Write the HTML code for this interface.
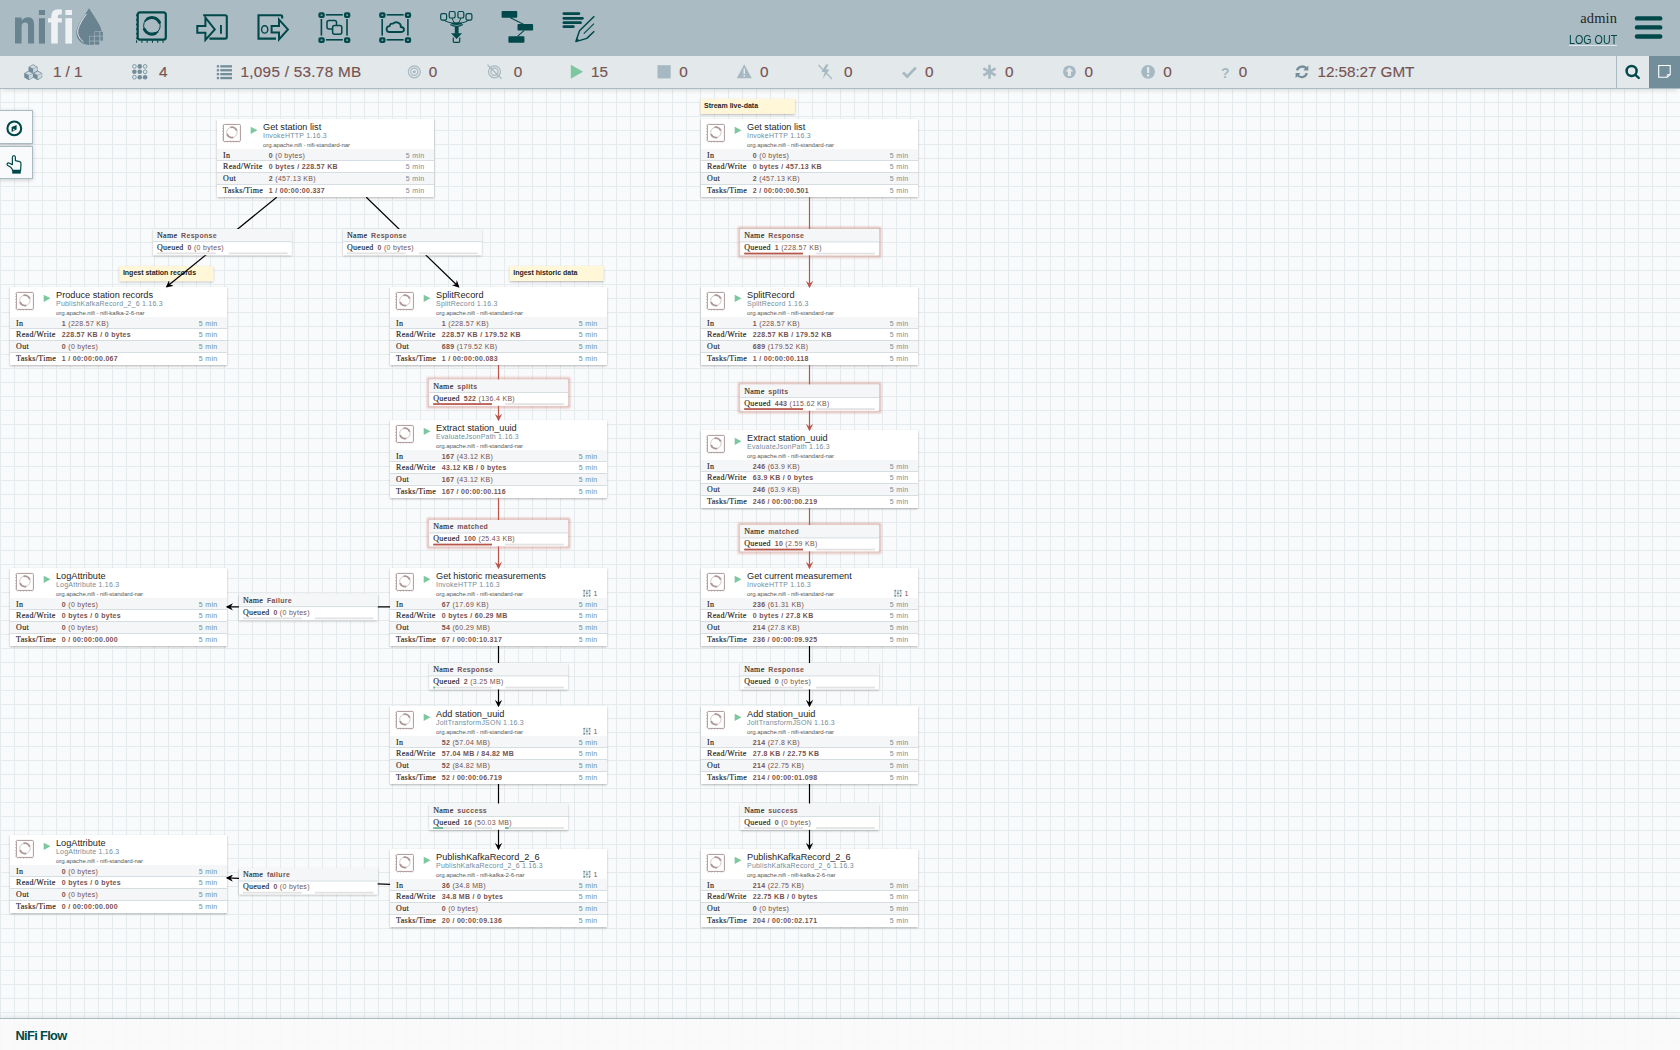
<!DOCTYPE html>
<html><head><meta charset="utf-8"><title>NiFi Flow</title>
<style>
html,body{margin:0;padding:0;width:1680px;height:1050px;overflow:hidden;font-family:"Liberation Sans", sans-serif;}
#canvas{position:absolute;left:0;top:88px;width:1680px;height:962px;background-color:#f9fafb;
background-image:linear-gradient(to right, #e5ebed 1px, transparent 1px),linear-gradient(to bottom, #e5ebed 1px, transparent 1px);
background-size:14px 14px;background-position:0 0;}
#cv{position:absolute;left:0;top:0;}
.pn{font-family:"Liberation Sans", sans-serif;font-size:9.2px;fill:#262626;}
.pt{font-family:"Liberation Sans", sans-serif;font-size:7.0px;fill:#728e9b;letter-spacing:0.22px;}
.pb{font-family:"Liberation Sans", sans-serif;font-size:6.1px;fill:#5a5a5a;letter-spacing:-0.08px;}
.sl{font-family:"Liberation Serif", serif;font-size:8.0px;fill:#262626;letter-spacing:0.3px;stroke:#262626;stroke-width:0.15px;}
.sv{font-family:"Liberation Sans", sans-serif;font-size:7.0px;fill:#775351;letter-spacing:0.3px;}
.b{font-weight:bold;}
.si{font-family:"Liberation Sans", sans-serif;font-size:7.0px;fill:#728e9b;text-anchor:end;letter-spacing:0.34px;}
.tc{text-anchor:end;}
.lt{font-family:"Liberation Sans", sans-serif;font-size:7px;font-weight:bold;fill:#262626;}

#header{position:absolute;left:0;top:0;width:1680px;height:56px;background:#aabbc3;z-index:10;}
#hdr{position:absolute;left:0;top:0;}
#user{position:absolute;right:63px;top:8.7px;font-family:"Liberation Serif",serif;font-size:14.5px;color:#262626;line-height:18px;letter-spacing:0.1px;}
#logout{position:absolute;left:1569px;top:33.7px;width:56.5px;font-family:"Liberation Sans",sans-serif;font-size:12.6px;color:#004849;line-height:13px;transform:scaleX(0.85);transform-origin:0 0;white-space:nowrap;}
#logul{position:absolute;left:1569px;top:45px;width:48px;height:1px;background:#dfe6e9;}
#status{position:absolute;left:0;top:56px;width:1680px;height:32px;background:#e3e8eb;border-bottom:1px solid #aabbc3;z-index:10;box-shadow:0 3px 5px -2px rgba(0,0,0,0.15);}
#sts{position:absolute;left:0;top:0;z-index:2;}
.st{position:absolute;top:4.0px;font-family:"Liberation Sans",sans-serif;font-size:15.3px;line-height:24px;color:#775351;white-space:nowrap;z-index:3;-webkit-text-stroke:0.15px #775351;letter-spacing:-0.08px;}
#srch{position:absolute;left:1616px;top:0;width:32px;height:32px;border-left:1px solid #aabbc3;}
#tog{position:absolute;left:1648.5px;top:0;width:31.5px;height:32px;background:#728e9b;z-index:1;}
.gc{position:absolute;left:-1px;width:31.6px;height:31.4px;border:1px solid #aabbc3;background:rgba(249,250,251,0.92);box-shadow:0 1px 4px rgba(0,0,0,0.2);z-index:5;}
#gcicons{position:absolute;left:0;top:100px;z-index:6;}
#footer{position:absolute;left:0;top:1018px;width:1680px;height:31px;border-top:1px solid #aabbc3;background:rgba(249,250,251,0.9);z-index:5;box-shadow:0 -1px 5px rgba(0,0,0,0.1);}
#footer span{position:absolute;left:15.5px;top:9px;font-family:"Liberation Sans",sans-serif;font-weight:bold;font-size:12.8px;line-height:16px;color:#004849;letter-spacing:-0.65px;}

</style></head><body>
<div id="canvas"></div>
<svg id="cv" width="1680" height="1050" viewBox="0 0 1680 1050">
<defs>
<filter id="sh" x="-10%" y="-20%" width="120%" height="140%"><feGaussianBlur in="SourceAlpha" stdDeviation="1.2"/><feOffset dx="0.4" dy="0.6" result="b"/><feFlood flood-color="#000" flood-opacity="0.28"/><feComposite in2="b" operator="in"/><feMerge><feMergeNode/><feMergeNode in="SourceGraphic"/></feMerge></filter>
<filter id="blur1" x="-10%" y="-30%" width="120%" height="160%"><feGaussianBlur stdDeviation="0.9"/></filter>
<marker id="ab" viewBox="0 0 6 6" refX="5" refY="3" markerWidth="6" markerHeight="6" orient="auto" markerUnits="strokeWidth"><path d="M2,3 L0,6 L6,3 L0,0 Z" fill="#000"/></marker>
<marker id="ar" viewBox="0 0 6 6" refX="5" refY="3" markerWidth="6" markerHeight="6" orient="auto" markerUnits="strokeWidth"><path d="M2,3 L0,6 L6,3 L0,0 Z" fill="#ba554a"/></marker>
</defs>
<rect x="119.5" y="266.1" width="93.8" height="15.0" fill="#fff7d7" filter="url(#sh)"/><text x="122.90" y="275.00" class="lt">Ingest station records</text>
<rect x="509.8" y="266.0" width="93.7" height="15.0" fill="#fff7d7" filter="url(#sh)"/><text x="513.20" y="274.90" class="lt">Ingest historic data</text>
<rect x="700.6" y="98.9" width="94.3" height="15.0" fill="#fff7d7" filter="url(#sh)"/><text x="704.00" y="107.80" class="lt">Stream live-data</text>
<g transform="translate(10,287)"><rect x="0" y="0" width="217.0" height="78.0" fill="#fff" filter="url(#sh)"/><rect x="0" y="30.0" width="217.0" height="11.299999999999997" fill="#f4f6f7"/><rect x="0" y="53.3" width="217.0" height="12.100000000000009" fill="#f4f6f7"/><rect x="0" y="41.00" width="217.0" height="0.7" fill="#c7d2d7"/><rect x="0" y="53.00" width="217.0" height="0.7" fill="#c7d2d7"/><rect x="0" y="65.10" width="217.0" height="0.7" fill="#c7d2d7"/><rect x="6.40" y="5.40" width="17.00" height="17.00" rx="1" fill="none" stroke="#ad9897" stroke-width="1.0"/><rect x="7.47" y="22.80" width="0.7" height="0.7" fill="#ad9897"/><rect x="5.30" y="6.47" width="0.7" height="0.7" fill="#ad9897"/><rect x="10.30" y="22.80" width="0.7" height="0.7" fill="#ad9897"/><rect x="5.30" y="9.30" width="0.7" height="0.7" fill="#ad9897"/><rect x="13.13" y="22.80" width="0.7" height="0.7" fill="#ad9897"/><rect x="5.30" y="12.13" width="0.7" height="0.7" fill="#ad9897"/><rect x="15.97" y="22.80" width="0.7" height="0.7" fill="#ad9897"/><rect x="5.30" y="14.97" width="0.7" height="0.7" fill="#ad9897"/><rect x="18.80" y="22.80" width="0.7" height="0.7" fill="#ad9897"/><rect x="5.30" y="17.80" width="0.7" height="0.7" fill="#ad9897"/><rect x="21.63" y="22.80" width="0.7" height="0.7" fill="#ad9897"/><rect x="5.30" y="20.63" width="0.7" height="0.7" fill="#ad9897"/><circle cx="14.90" cy="13.40" r="5.20" fill="none" stroke="#ad9897" stroke-width="0.55"/><path d="M13.55,8.38 A5.20,5.20 0 0 1 19.79,11.62" fill="none" stroke="#ad9897" stroke-width="1.9"/><path d="M16.25,18.42 A5.20,5.20 0 0 1 10.01,15.18" fill="none" stroke="#ad9897" stroke-width="1.9"/><path d="M33.7,7.7 L40.5,11.3 L33.7,14.9 Z" fill="#7dc7a0"/><text x="46.0" y="11.4" class="pn">Produce station records</text><text x="46.0" y="19.3" class="pt">PublishKafkaRecord_2_6 1.16.3</text><text x="46.0" y="28.0" class="pb">org.apache.nifi - nifi-kafka-2-6-nar</text><text x="6.1" y="39.3" class="sl">In</text><text x="51.8" y="39.3" class="sv"><tspan class="b">1</tspan> (228.57 KB)</text><text x="207.60" y="39.3" class="si">5 min</text><text x="6.1" y="50.2" class="sl">Read/Write</text><text x="51.8" y="50.2" class="sv"><tspan class="b">228.57 KB / 0 bytes</tspan></text><text x="207.60" y="50.2" class="si">5 min</text><text x="6.1" y="62.1" class="sl">Out</text><text x="51.8" y="62.1" class="sv"><tspan class="b">0</tspan> (0 bytes)</text><text x="207.60" y="62.1" class="si">5 min</text><text x="6.1" y="74.3" class="sl">Tasks/Time</text><text x="51.8" y="74.3" class="sv"><tspan class="b">1 / 00:00:00.067</tspan></text><text x="207.60" y="74.3" class="si">5 min</text></g>
<g transform="translate(10,568)"><rect x="0" y="0" width="217.0" height="78.0" fill="#fff" filter="url(#sh)"/><rect x="0" y="30.0" width="217.0" height="11.299999999999997" fill="#f4f6f7"/><rect x="0" y="53.3" width="217.0" height="12.100000000000009" fill="#f4f6f7"/><rect x="0" y="41.00" width="217.0" height="0.7" fill="#c7d2d7"/><rect x="0" y="53.00" width="217.0" height="0.7" fill="#c7d2d7"/><rect x="0" y="65.10" width="217.0" height="0.7" fill="#c7d2d7"/><rect x="6.40" y="5.40" width="17.00" height="17.00" rx="1" fill="none" stroke="#ad9897" stroke-width="1.0"/><rect x="7.47" y="22.80" width="0.7" height="0.7" fill="#ad9897"/><rect x="5.30" y="6.47" width="0.7" height="0.7" fill="#ad9897"/><rect x="10.30" y="22.80" width="0.7" height="0.7" fill="#ad9897"/><rect x="5.30" y="9.30" width="0.7" height="0.7" fill="#ad9897"/><rect x="13.13" y="22.80" width="0.7" height="0.7" fill="#ad9897"/><rect x="5.30" y="12.13" width="0.7" height="0.7" fill="#ad9897"/><rect x="15.97" y="22.80" width="0.7" height="0.7" fill="#ad9897"/><rect x="5.30" y="14.97" width="0.7" height="0.7" fill="#ad9897"/><rect x="18.80" y="22.80" width="0.7" height="0.7" fill="#ad9897"/><rect x="5.30" y="17.80" width="0.7" height="0.7" fill="#ad9897"/><rect x="21.63" y="22.80" width="0.7" height="0.7" fill="#ad9897"/><rect x="5.30" y="20.63" width="0.7" height="0.7" fill="#ad9897"/><circle cx="14.90" cy="13.40" r="5.20" fill="none" stroke="#ad9897" stroke-width="0.55"/><path d="M13.55,8.38 A5.20,5.20 0 0 1 19.79,11.62" fill="none" stroke="#ad9897" stroke-width="1.9"/><path d="M16.25,18.42 A5.20,5.20 0 0 1 10.01,15.18" fill="none" stroke="#ad9897" stroke-width="1.9"/><path d="M33.7,7.7 L40.5,11.3 L33.7,14.9 Z" fill="#7dc7a0"/><text x="46.0" y="11.4" class="pn">LogAttribute</text><text x="46.0" y="19.3" class="pt">LogAttribute 1.16.3</text><text x="46.0" y="28.0" class="pb">org.apache.nifi - nifi-standard-nar</text><text x="6.1" y="39.3" class="sl">In</text><text x="51.8" y="39.3" class="sv"><tspan class="b">0</tspan> (0 bytes)</text><text x="207.60" y="39.3" class="si">5 min</text><text x="6.1" y="50.2" class="sl">Read/Write</text><text x="51.8" y="50.2" class="sv"><tspan class="b">0 bytes / 0 bytes</tspan></text><text x="207.60" y="50.2" class="si">5 min</text><text x="6.1" y="62.1" class="sl">Out</text><text x="51.8" y="62.1" class="sv"><tspan class="b">0</tspan> (0 bytes)</text><text x="207.60" y="62.1" class="si">5 min</text><text x="6.1" y="74.3" class="sl">Tasks/Time</text><text x="51.8" y="74.3" class="sv"><tspan class="b">0 / 00:00:00.000</tspan></text><text x="207.60" y="74.3" class="si">5 min</text></g>
<g transform="translate(10,835)"><rect x="0" y="0" width="217.0" height="78.0" fill="#fff" filter="url(#sh)"/><rect x="0" y="30.0" width="217.0" height="11.299999999999997" fill="#f4f6f7"/><rect x="0" y="53.3" width="217.0" height="12.100000000000009" fill="#f4f6f7"/><rect x="0" y="41.00" width="217.0" height="0.7" fill="#c7d2d7"/><rect x="0" y="53.00" width="217.0" height="0.7" fill="#c7d2d7"/><rect x="0" y="65.10" width="217.0" height="0.7" fill="#c7d2d7"/><rect x="6.40" y="5.40" width="17.00" height="17.00" rx="1" fill="none" stroke="#ad9897" stroke-width="1.0"/><rect x="7.47" y="22.80" width="0.7" height="0.7" fill="#ad9897"/><rect x="5.30" y="6.47" width="0.7" height="0.7" fill="#ad9897"/><rect x="10.30" y="22.80" width="0.7" height="0.7" fill="#ad9897"/><rect x="5.30" y="9.30" width="0.7" height="0.7" fill="#ad9897"/><rect x="13.13" y="22.80" width="0.7" height="0.7" fill="#ad9897"/><rect x="5.30" y="12.13" width="0.7" height="0.7" fill="#ad9897"/><rect x="15.97" y="22.80" width="0.7" height="0.7" fill="#ad9897"/><rect x="5.30" y="14.97" width="0.7" height="0.7" fill="#ad9897"/><rect x="18.80" y="22.80" width="0.7" height="0.7" fill="#ad9897"/><rect x="5.30" y="17.80" width="0.7" height="0.7" fill="#ad9897"/><rect x="21.63" y="22.80" width="0.7" height="0.7" fill="#ad9897"/><rect x="5.30" y="20.63" width="0.7" height="0.7" fill="#ad9897"/><circle cx="14.90" cy="13.40" r="5.20" fill="none" stroke="#ad9897" stroke-width="0.55"/><path d="M13.55,8.38 A5.20,5.20 0 0 1 19.79,11.62" fill="none" stroke="#ad9897" stroke-width="1.9"/><path d="M16.25,18.42 A5.20,5.20 0 0 1 10.01,15.18" fill="none" stroke="#ad9897" stroke-width="1.9"/><path d="M33.7,7.7 L40.5,11.3 L33.7,14.9 Z" fill="#7dc7a0"/><text x="46.0" y="11.4" class="pn">LogAttribute</text><text x="46.0" y="19.3" class="pt">LogAttribute 1.16.3</text><text x="46.0" y="28.0" class="pb">org.apache.nifi - nifi-standard-nar</text><text x="6.1" y="39.3" class="sl">In</text><text x="51.8" y="39.3" class="sv"><tspan class="b">0</tspan> (0 bytes)</text><text x="207.60" y="39.3" class="si">5 min</text><text x="6.1" y="50.2" class="sl">Read/Write</text><text x="51.8" y="50.2" class="sv"><tspan class="b">0 bytes / 0 bytes</tspan></text><text x="207.60" y="50.2" class="si">5 min</text><text x="6.1" y="62.1" class="sl">Out</text><text x="51.8" y="62.1" class="sv"><tspan class="b">0</tspan> (0 bytes)</text><text x="207.60" y="62.1" class="si">5 min</text><text x="6.1" y="74.3" class="sl">Tasks/Time</text><text x="51.8" y="74.3" class="sv"><tspan class="b">0 / 00:00:00.000</tspan></text><text x="207.60" y="74.3" class="si">5 min</text></g>
<g transform="translate(217,119)"><rect x="0" y="0" width="217.0" height="78.0" fill="#fff" filter="url(#sh)"/><rect x="0" y="30.0" width="217.0" height="11.299999999999997" fill="#f4f6f7"/><rect x="0" y="53.3" width="217.0" height="12.100000000000009" fill="#f4f6f7"/><rect x="0" y="41.00" width="217.0" height="0.7" fill="#c7d2d7"/><rect x="0" y="53.00" width="217.0" height="0.7" fill="#c7d2d7"/><rect x="0" y="65.10" width="217.0" height="0.7" fill="#c7d2d7"/><rect x="6.40" y="5.40" width="17.00" height="17.00" rx="1" fill="none" stroke="#ad9897" stroke-width="1.0"/><rect x="7.47" y="22.80" width="0.7" height="0.7" fill="#ad9897"/><rect x="5.30" y="6.47" width="0.7" height="0.7" fill="#ad9897"/><rect x="10.30" y="22.80" width="0.7" height="0.7" fill="#ad9897"/><rect x="5.30" y="9.30" width="0.7" height="0.7" fill="#ad9897"/><rect x="13.13" y="22.80" width="0.7" height="0.7" fill="#ad9897"/><rect x="5.30" y="12.13" width="0.7" height="0.7" fill="#ad9897"/><rect x="15.97" y="22.80" width="0.7" height="0.7" fill="#ad9897"/><rect x="5.30" y="14.97" width="0.7" height="0.7" fill="#ad9897"/><rect x="18.80" y="22.80" width="0.7" height="0.7" fill="#ad9897"/><rect x="5.30" y="17.80" width="0.7" height="0.7" fill="#ad9897"/><rect x="21.63" y="22.80" width="0.7" height="0.7" fill="#ad9897"/><rect x="5.30" y="20.63" width="0.7" height="0.7" fill="#ad9897"/><circle cx="14.90" cy="13.40" r="5.20" fill="none" stroke="#ad9897" stroke-width="0.55"/><path d="M13.55,8.38 A5.20,5.20 0 0 1 19.79,11.62" fill="none" stroke="#ad9897" stroke-width="1.9"/><path d="M16.25,18.42 A5.20,5.20 0 0 1 10.01,15.18" fill="none" stroke="#ad9897" stroke-width="1.9"/><path d="M33.7,7.7 L40.5,11.3 L33.7,14.9 Z" fill="#7dc7a0"/><text x="46.0" y="11.4" class="pn">Get station list</text><text x="46.0" y="19.3" class="pt">InvokeHTTP 1.16.3</text><text x="46.0" y="28.0" class="pb">org.apache.nifi - nifi-standard-nar</text><text x="6.1" y="39.3" class="sl">In</text><text x="51.8" y="39.3" class="sv"><tspan class="b">0</tspan> (0 bytes)</text><text x="207.60" y="39.3" class="si">5 min</text><text x="6.1" y="50.2" class="sl">Read/Write</text><text x="51.8" y="50.2" class="sv"><tspan class="b">0 bytes / 228.57 KB</tspan></text><text x="207.60" y="50.2" class="si">5 min</text><text x="6.1" y="62.1" class="sl">Out</text><text x="51.8" y="62.1" class="sv"><tspan class="b">2</tspan> (457.13 KB)</text><text x="207.60" y="62.1" class="si">5 min</text><text x="6.1" y="74.3" class="sl">Tasks/Time</text><text x="51.8" y="74.3" class="sv"><tspan class="b">1 / 00:00:00.337</tspan></text><text x="207.60" y="74.3" class="si">5 min</text></g>
<g transform="translate(390,287)"><rect x="0" y="0" width="217.0" height="78.0" fill="#fff" filter="url(#sh)"/><rect x="0" y="30.0" width="217.0" height="11.299999999999997" fill="#f4f6f7"/><rect x="0" y="53.3" width="217.0" height="12.100000000000009" fill="#f4f6f7"/><rect x="0" y="41.00" width="217.0" height="0.7" fill="#c7d2d7"/><rect x="0" y="53.00" width="217.0" height="0.7" fill="#c7d2d7"/><rect x="0" y="65.10" width="217.0" height="0.7" fill="#c7d2d7"/><rect x="6.40" y="5.40" width="17.00" height="17.00" rx="1" fill="none" stroke="#ad9897" stroke-width="1.0"/><rect x="7.47" y="22.80" width="0.7" height="0.7" fill="#ad9897"/><rect x="5.30" y="6.47" width="0.7" height="0.7" fill="#ad9897"/><rect x="10.30" y="22.80" width="0.7" height="0.7" fill="#ad9897"/><rect x="5.30" y="9.30" width="0.7" height="0.7" fill="#ad9897"/><rect x="13.13" y="22.80" width="0.7" height="0.7" fill="#ad9897"/><rect x="5.30" y="12.13" width="0.7" height="0.7" fill="#ad9897"/><rect x="15.97" y="22.80" width="0.7" height="0.7" fill="#ad9897"/><rect x="5.30" y="14.97" width="0.7" height="0.7" fill="#ad9897"/><rect x="18.80" y="22.80" width="0.7" height="0.7" fill="#ad9897"/><rect x="5.30" y="17.80" width="0.7" height="0.7" fill="#ad9897"/><rect x="21.63" y="22.80" width="0.7" height="0.7" fill="#ad9897"/><rect x="5.30" y="20.63" width="0.7" height="0.7" fill="#ad9897"/><circle cx="14.90" cy="13.40" r="5.20" fill="none" stroke="#ad9897" stroke-width="0.55"/><path d="M13.55,8.38 A5.20,5.20 0 0 1 19.79,11.62" fill="none" stroke="#ad9897" stroke-width="1.9"/><path d="M16.25,18.42 A5.20,5.20 0 0 1 10.01,15.18" fill="none" stroke="#ad9897" stroke-width="1.9"/><path d="M33.7,7.7 L40.5,11.3 L33.7,14.9 Z" fill="#7dc7a0"/><text x="46.0" y="11.4" class="pn">SplitRecord</text><text x="46.0" y="19.3" class="pt">SplitRecord 1.16.3</text><text x="46.0" y="28.0" class="pb">org.apache.nifi - nifi-standard-nar</text><text x="6.1" y="39.3" class="sl">In</text><text x="51.8" y="39.3" class="sv"><tspan class="b">1</tspan> (228.57 KB)</text><text x="207.60" y="39.3" class="si">5 min</text><text x="6.1" y="50.2" class="sl">Read/Write</text><text x="51.8" y="50.2" class="sv"><tspan class="b">228.57 KB / 179.52 KB</tspan></text><text x="207.60" y="50.2" class="si">5 min</text><text x="6.1" y="62.1" class="sl">Out</text><text x="51.8" y="62.1" class="sv"><tspan class="b">689</tspan> (179.52 KB)</text><text x="207.60" y="62.1" class="si">5 min</text><text x="6.1" y="74.3" class="sl">Tasks/Time</text><text x="51.8" y="74.3" class="sv"><tspan class="b">1 / 00:00:00.083</tspan></text><text x="207.60" y="74.3" class="si">5 min</text></g>
<g transform="translate(390,420)"><rect x="0" y="0" width="217.0" height="78.0" fill="#fff" filter="url(#sh)"/><rect x="0" y="30.0" width="217.0" height="11.299999999999997" fill="#f4f6f7"/><rect x="0" y="53.3" width="217.0" height="12.100000000000009" fill="#f4f6f7"/><rect x="0" y="41.00" width="217.0" height="0.7" fill="#c7d2d7"/><rect x="0" y="53.00" width="217.0" height="0.7" fill="#c7d2d7"/><rect x="0" y="65.10" width="217.0" height="0.7" fill="#c7d2d7"/><rect x="6.40" y="5.40" width="17.00" height="17.00" rx="1" fill="none" stroke="#ad9897" stroke-width="1.0"/><rect x="7.47" y="22.80" width="0.7" height="0.7" fill="#ad9897"/><rect x="5.30" y="6.47" width="0.7" height="0.7" fill="#ad9897"/><rect x="10.30" y="22.80" width="0.7" height="0.7" fill="#ad9897"/><rect x="5.30" y="9.30" width="0.7" height="0.7" fill="#ad9897"/><rect x="13.13" y="22.80" width="0.7" height="0.7" fill="#ad9897"/><rect x="5.30" y="12.13" width="0.7" height="0.7" fill="#ad9897"/><rect x="15.97" y="22.80" width="0.7" height="0.7" fill="#ad9897"/><rect x="5.30" y="14.97" width="0.7" height="0.7" fill="#ad9897"/><rect x="18.80" y="22.80" width="0.7" height="0.7" fill="#ad9897"/><rect x="5.30" y="17.80" width="0.7" height="0.7" fill="#ad9897"/><rect x="21.63" y="22.80" width="0.7" height="0.7" fill="#ad9897"/><rect x="5.30" y="20.63" width="0.7" height="0.7" fill="#ad9897"/><circle cx="14.90" cy="13.40" r="5.20" fill="none" stroke="#ad9897" stroke-width="0.55"/><path d="M13.55,8.38 A5.20,5.20 0 0 1 19.79,11.62" fill="none" stroke="#ad9897" stroke-width="1.9"/><path d="M16.25,18.42 A5.20,5.20 0 0 1 10.01,15.18" fill="none" stroke="#ad9897" stroke-width="1.9"/><path d="M33.7,7.7 L40.5,11.3 L33.7,14.9 Z" fill="#7dc7a0"/><text x="46.0" y="11.4" class="pn">Extract station_uuid</text><text x="46.0" y="19.3" class="pt">EvaluateJsonPath 1.16.3</text><text x="46.0" y="28.0" class="pb">org.apache.nifi - nifi-standard-nar</text><text x="6.1" y="39.3" class="sl">In</text><text x="51.8" y="39.3" class="sv"><tspan class="b">167</tspan> (43.12 KB)</text><text x="207.60" y="39.3" class="si">5 min</text><text x="6.1" y="50.2" class="sl">Read/Write</text><text x="51.8" y="50.2" class="sv"><tspan class="b">43.12 KB / 0 bytes</tspan></text><text x="207.60" y="50.2" class="si">5 min</text><text x="6.1" y="62.1" class="sl">Out</text><text x="51.8" y="62.1" class="sv"><tspan class="b">167</tspan> (43.12 KB)</text><text x="207.60" y="62.1" class="si">5 min</text><text x="6.1" y="74.3" class="sl">Tasks/Time</text><text x="51.8" y="74.3" class="sv"><tspan class="b">167 / 00:00:00.116</tspan></text><text x="207.60" y="74.3" class="si">5 min</text></g>
<g transform="translate(390,568)"><rect x="0" y="0" width="217.0" height="78.0" fill="#fff" filter="url(#sh)"/><rect x="0" y="30.0" width="217.0" height="11.299999999999997" fill="#f4f6f7"/><rect x="0" y="53.3" width="217.0" height="12.100000000000009" fill="#f4f6f7"/><rect x="0" y="41.00" width="217.0" height="0.7" fill="#c7d2d7"/><rect x="0" y="53.00" width="217.0" height="0.7" fill="#c7d2d7"/><rect x="0" y="65.10" width="217.0" height="0.7" fill="#c7d2d7"/><rect x="6.40" y="5.40" width="17.00" height="17.00" rx="1" fill="none" stroke="#ad9897" stroke-width="1.0"/><rect x="7.47" y="22.80" width="0.7" height="0.7" fill="#ad9897"/><rect x="5.30" y="6.47" width="0.7" height="0.7" fill="#ad9897"/><rect x="10.30" y="22.80" width="0.7" height="0.7" fill="#ad9897"/><rect x="5.30" y="9.30" width="0.7" height="0.7" fill="#ad9897"/><rect x="13.13" y="22.80" width="0.7" height="0.7" fill="#ad9897"/><rect x="5.30" y="12.13" width="0.7" height="0.7" fill="#ad9897"/><rect x="15.97" y="22.80" width="0.7" height="0.7" fill="#ad9897"/><rect x="5.30" y="14.97" width="0.7" height="0.7" fill="#ad9897"/><rect x="18.80" y="22.80" width="0.7" height="0.7" fill="#ad9897"/><rect x="5.30" y="17.80" width="0.7" height="0.7" fill="#ad9897"/><rect x="21.63" y="22.80" width="0.7" height="0.7" fill="#ad9897"/><rect x="5.30" y="20.63" width="0.7" height="0.7" fill="#ad9897"/><circle cx="14.90" cy="13.40" r="5.20" fill="none" stroke="#ad9897" stroke-width="0.55"/><path d="M13.55,8.38 A5.20,5.20 0 0 1 19.79,11.62" fill="none" stroke="#ad9897" stroke-width="1.9"/><path d="M16.25,18.42 A5.20,5.20 0 0 1 10.01,15.18" fill="none" stroke="#ad9897" stroke-width="1.9"/><path d="M33.7,7.7 L40.5,11.3 L33.7,14.9 Z" fill="#7dc7a0"/><text x="46.0" y="11.4" class="pn">Get historic measurements</text><text x="46.0" y="19.3" class="pt">InvokeHTTP 1.16.3</text><text x="46.0" y="28.0" class="pb">org.apache.nifi - nifi-standard-nar</text><text x="6.1" y="39.3" class="sl">In</text><text x="51.8" y="39.3" class="sv"><tspan class="b">67</tspan> (17.69 KB)</text><text x="207.60" y="39.3" class="si">5 min</text><text x="6.1" y="50.2" class="sl">Read/Write</text><text x="51.8" y="50.2" class="sv"><tspan class="b">0 bytes / 60.29 MB</tspan></text><text x="207.60" y="50.2" class="si">5 min</text><text x="6.1" y="62.1" class="sl">Out</text><text x="51.8" y="62.1" class="sv"><tspan class="b">54</tspan> (60.29 MB)</text><text x="207.60" y="62.1" class="si">5 min</text><text x="6.1" y="74.3" class="sl">Tasks/Time</text><text x="51.8" y="74.3" class="sv"><tspan class="b">67 / 00:00:10.317</tspan></text><text x="207.60" y="74.3" class="si">5 min</text><circle cx="194.20" cy="22.80" r="1.05" fill="#728e9b"/><circle cx="194.20" cy="25.30" r="0.85" fill="none" stroke="#728e9b" stroke-width="0.5"/><circle cx="194.20" cy="27.80" r="1.05" fill="#728e9b"/><circle cx="196.90" cy="22.80" r="0.85" fill="none" stroke="#728e9b" stroke-width="0.5"/><circle cx="196.90" cy="25.30" r="1.05" fill="#728e9b"/><circle cx="196.90" cy="27.80" r="0.85" fill="none" stroke="#728e9b" stroke-width="0.5"/><circle cx="199.60" cy="22.80" r="1.05" fill="#728e9b"/><circle cx="199.60" cy="25.30" r="0.85" fill="none" stroke="#728e9b" stroke-width="0.5"/><circle cx="199.60" cy="27.80" r="1.05" fill="#728e9b"/><text x="207.60" y="28.2" class="sv tc">1</text></g>
<g transform="translate(390,706)"><rect x="0" y="0" width="217.0" height="78.0" fill="#fff" filter="url(#sh)"/><rect x="0" y="30.0" width="217.0" height="11.299999999999997" fill="#f4f6f7"/><rect x="0" y="53.3" width="217.0" height="12.100000000000009" fill="#f4f6f7"/><rect x="0" y="41.00" width="217.0" height="0.7" fill="#c7d2d7"/><rect x="0" y="53.00" width="217.0" height="0.7" fill="#c7d2d7"/><rect x="0" y="65.10" width="217.0" height="0.7" fill="#c7d2d7"/><rect x="6.40" y="5.40" width="17.00" height="17.00" rx="1" fill="none" stroke="#ad9897" stroke-width="1.0"/><rect x="7.47" y="22.80" width="0.7" height="0.7" fill="#ad9897"/><rect x="5.30" y="6.47" width="0.7" height="0.7" fill="#ad9897"/><rect x="10.30" y="22.80" width="0.7" height="0.7" fill="#ad9897"/><rect x="5.30" y="9.30" width="0.7" height="0.7" fill="#ad9897"/><rect x="13.13" y="22.80" width="0.7" height="0.7" fill="#ad9897"/><rect x="5.30" y="12.13" width="0.7" height="0.7" fill="#ad9897"/><rect x="15.97" y="22.80" width="0.7" height="0.7" fill="#ad9897"/><rect x="5.30" y="14.97" width="0.7" height="0.7" fill="#ad9897"/><rect x="18.80" y="22.80" width="0.7" height="0.7" fill="#ad9897"/><rect x="5.30" y="17.80" width="0.7" height="0.7" fill="#ad9897"/><rect x="21.63" y="22.80" width="0.7" height="0.7" fill="#ad9897"/><rect x="5.30" y="20.63" width="0.7" height="0.7" fill="#ad9897"/><circle cx="14.90" cy="13.40" r="5.20" fill="none" stroke="#ad9897" stroke-width="0.55"/><path d="M13.55,8.38 A5.20,5.20 0 0 1 19.79,11.62" fill="none" stroke="#ad9897" stroke-width="1.9"/><path d="M16.25,18.42 A5.20,5.20 0 0 1 10.01,15.18" fill="none" stroke="#ad9897" stroke-width="1.9"/><path d="M33.7,7.7 L40.5,11.3 L33.7,14.9 Z" fill="#7dc7a0"/><text x="46.0" y="11.4" class="pn">Add station_uuid</text><text x="46.0" y="19.3" class="pt">JoltTransformJSON 1.16.3</text><text x="46.0" y="28.0" class="pb">org.apache.nifi - nifi-standard-nar</text><text x="6.1" y="39.3" class="sl">In</text><text x="51.8" y="39.3" class="sv"><tspan class="b">52</tspan> (57.04 MB)</text><text x="207.60" y="39.3" class="si">5 min</text><text x="6.1" y="50.2" class="sl">Read/Write</text><text x="51.8" y="50.2" class="sv"><tspan class="b">57.04 MB / 84.82 MB</tspan></text><text x="207.60" y="50.2" class="si">5 min</text><text x="6.1" y="62.1" class="sl">Out</text><text x="51.8" y="62.1" class="sv"><tspan class="b">52</tspan> (84.82 MB)</text><text x="207.60" y="62.1" class="si">5 min</text><text x="6.1" y="74.3" class="sl">Tasks/Time</text><text x="51.8" y="74.3" class="sv"><tspan class="b">52 / 00:00:06.719</tspan></text><text x="207.60" y="74.3" class="si">5 min</text><circle cx="194.20" cy="22.80" r="1.05" fill="#728e9b"/><circle cx="194.20" cy="25.30" r="0.85" fill="none" stroke="#728e9b" stroke-width="0.5"/><circle cx="194.20" cy="27.80" r="1.05" fill="#728e9b"/><circle cx="196.90" cy="22.80" r="0.85" fill="none" stroke="#728e9b" stroke-width="0.5"/><circle cx="196.90" cy="25.30" r="1.05" fill="#728e9b"/><circle cx="196.90" cy="27.80" r="0.85" fill="none" stroke="#728e9b" stroke-width="0.5"/><circle cx="199.60" cy="22.80" r="1.05" fill="#728e9b"/><circle cx="199.60" cy="25.30" r="0.85" fill="none" stroke="#728e9b" stroke-width="0.5"/><circle cx="199.60" cy="27.80" r="1.05" fill="#728e9b"/><text x="207.60" y="28.2" class="sv tc">1</text></g>
<g transform="translate(390,849)"><rect x="0" y="0" width="217.0" height="78.0" fill="#fff" filter="url(#sh)"/><rect x="0" y="30.0" width="217.0" height="11.299999999999997" fill="#f4f6f7"/><rect x="0" y="53.3" width="217.0" height="12.100000000000009" fill="#f4f6f7"/><rect x="0" y="41.00" width="217.0" height="0.7" fill="#c7d2d7"/><rect x="0" y="53.00" width="217.0" height="0.7" fill="#c7d2d7"/><rect x="0" y="65.10" width="217.0" height="0.7" fill="#c7d2d7"/><rect x="6.40" y="5.40" width="17.00" height="17.00" rx="1" fill="none" stroke="#ad9897" stroke-width="1.0"/><rect x="7.47" y="22.80" width="0.7" height="0.7" fill="#ad9897"/><rect x="5.30" y="6.47" width="0.7" height="0.7" fill="#ad9897"/><rect x="10.30" y="22.80" width="0.7" height="0.7" fill="#ad9897"/><rect x="5.30" y="9.30" width="0.7" height="0.7" fill="#ad9897"/><rect x="13.13" y="22.80" width="0.7" height="0.7" fill="#ad9897"/><rect x="5.30" y="12.13" width="0.7" height="0.7" fill="#ad9897"/><rect x="15.97" y="22.80" width="0.7" height="0.7" fill="#ad9897"/><rect x="5.30" y="14.97" width="0.7" height="0.7" fill="#ad9897"/><rect x="18.80" y="22.80" width="0.7" height="0.7" fill="#ad9897"/><rect x="5.30" y="17.80" width="0.7" height="0.7" fill="#ad9897"/><rect x="21.63" y="22.80" width="0.7" height="0.7" fill="#ad9897"/><rect x="5.30" y="20.63" width="0.7" height="0.7" fill="#ad9897"/><circle cx="14.90" cy="13.40" r="5.20" fill="none" stroke="#ad9897" stroke-width="0.55"/><path d="M13.55,8.38 A5.20,5.20 0 0 1 19.79,11.62" fill="none" stroke="#ad9897" stroke-width="1.9"/><path d="M16.25,18.42 A5.20,5.20 0 0 1 10.01,15.18" fill="none" stroke="#ad9897" stroke-width="1.9"/><path d="M33.7,7.7 L40.5,11.3 L33.7,14.9 Z" fill="#7dc7a0"/><text x="46.0" y="11.4" class="pn">PublishKafkaRecord_2_6</text><text x="46.0" y="19.3" class="pt">PublishKafkaRecord_2_6 1.16.3</text><text x="46.0" y="28.0" class="pb">org.apache.nifi - nifi-kafka-2-6-nar</text><text x="6.1" y="39.3" class="sl">In</text><text x="51.8" y="39.3" class="sv"><tspan class="b">36</tspan> (34.8 MB)</text><text x="207.60" y="39.3" class="si">5 min</text><text x="6.1" y="50.2" class="sl">Read/Write</text><text x="51.8" y="50.2" class="sv"><tspan class="b">34.8 MB / 0 bytes</tspan></text><text x="207.60" y="50.2" class="si">5 min</text><text x="6.1" y="62.1" class="sl">Out</text><text x="51.8" y="62.1" class="sv"><tspan class="b">0</tspan> (0 bytes)</text><text x="207.60" y="62.1" class="si">5 min</text><text x="6.1" y="74.3" class="sl">Tasks/Time</text><text x="51.8" y="74.3" class="sv"><tspan class="b">20 / 00:00:09.136</tspan></text><text x="207.60" y="74.3" class="si">5 min</text><circle cx="194.20" cy="22.80" r="1.05" fill="#728e9b"/><circle cx="194.20" cy="25.30" r="0.85" fill="none" stroke="#728e9b" stroke-width="0.5"/><circle cx="194.20" cy="27.80" r="1.05" fill="#728e9b"/><circle cx="196.90" cy="22.80" r="0.85" fill="none" stroke="#728e9b" stroke-width="0.5"/><circle cx="196.90" cy="25.30" r="1.05" fill="#728e9b"/><circle cx="196.90" cy="27.80" r="0.85" fill="none" stroke="#728e9b" stroke-width="0.5"/><circle cx="199.60" cy="22.80" r="1.05" fill="#728e9b"/><circle cx="199.60" cy="25.30" r="0.85" fill="none" stroke="#728e9b" stroke-width="0.5"/><circle cx="199.60" cy="27.80" r="1.05" fill="#728e9b"/><text x="207.60" y="28.2" class="sv tc">1</text></g>
<g transform="translate(701,119)"><rect x="0" y="0" width="217.0" height="78.0" fill="#fff" filter="url(#sh)"/><rect x="0" y="30.0" width="217.0" height="11.299999999999997" fill="#f4f6f7"/><rect x="0" y="53.3" width="217.0" height="12.100000000000009" fill="#f4f6f7"/><rect x="0" y="41.00" width="217.0" height="0.7" fill="#c7d2d7"/><rect x="0" y="53.00" width="217.0" height="0.7" fill="#c7d2d7"/><rect x="0" y="65.10" width="217.0" height="0.7" fill="#c7d2d7"/><rect x="6.40" y="5.40" width="17.00" height="17.00" rx="1" fill="none" stroke="#ad9897" stroke-width="1.0"/><rect x="7.47" y="22.80" width="0.7" height="0.7" fill="#ad9897"/><rect x="5.30" y="6.47" width="0.7" height="0.7" fill="#ad9897"/><rect x="10.30" y="22.80" width="0.7" height="0.7" fill="#ad9897"/><rect x="5.30" y="9.30" width="0.7" height="0.7" fill="#ad9897"/><rect x="13.13" y="22.80" width="0.7" height="0.7" fill="#ad9897"/><rect x="5.30" y="12.13" width="0.7" height="0.7" fill="#ad9897"/><rect x="15.97" y="22.80" width="0.7" height="0.7" fill="#ad9897"/><rect x="5.30" y="14.97" width="0.7" height="0.7" fill="#ad9897"/><rect x="18.80" y="22.80" width="0.7" height="0.7" fill="#ad9897"/><rect x="5.30" y="17.80" width="0.7" height="0.7" fill="#ad9897"/><rect x="21.63" y="22.80" width="0.7" height="0.7" fill="#ad9897"/><rect x="5.30" y="20.63" width="0.7" height="0.7" fill="#ad9897"/><circle cx="14.90" cy="13.40" r="5.20" fill="none" stroke="#ad9897" stroke-width="0.55"/><path d="M13.55,8.38 A5.20,5.20 0 0 1 19.79,11.62" fill="none" stroke="#ad9897" stroke-width="1.9"/><path d="M16.25,18.42 A5.20,5.20 0 0 1 10.01,15.18" fill="none" stroke="#ad9897" stroke-width="1.9"/><path d="M33.7,7.7 L40.5,11.3 L33.7,14.9 Z" fill="#7dc7a0"/><text x="46.0" y="11.4" class="pn">Get station list</text><text x="46.0" y="19.3" class="pt">InvokeHTTP 1.16.3</text><text x="46.0" y="28.0" class="pb">org.apache.nifi - nifi-standard-nar</text><text x="6.1" y="39.3" class="sl">In</text><text x="51.8" y="39.3" class="sv"><tspan class="b">0</tspan> (0 bytes)</text><text x="207.60" y="39.3" class="si">5 min</text><text x="6.1" y="50.2" class="sl">Read/Write</text><text x="51.8" y="50.2" class="sv"><tspan class="b">0 bytes / 457.13 KB</tspan></text><text x="207.60" y="50.2" class="si">5 min</text><text x="6.1" y="62.1" class="sl">Out</text><text x="51.8" y="62.1" class="sv"><tspan class="b">2</tspan> (457.13 KB)</text><text x="207.60" y="62.1" class="si">5 min</text><text x="6.1" y="74.3" class="sl">Tasks/Time</text><text x="51.8" y="74.3" class="sv"><tspan class="b">2 / 00:00:00.501</tspan></text><text x="207.60" y="74.3" class="si">5 min</text></g>
<g transform="translate(701,287)"><rect x="0" y="0" width="217.0" height="78.0" fill="#fff" filter="url(#sh)"/><rect x="0" y="30.0" width="217.0" height="11.299999999999997" fill="#f4f6f7"/><rect x="0" y="53.3" width="217.0" height="12.100000000000009" fill="#f4f6f7"/><rect x="0" y="41.00" width="217.0" height="0.7" fill="#c7d2d7"/><rect x="0" y="53.00" width="217.0" height="0.7" fill="#c7d2d7"/><rect x="0" y="65.10" width="217.0" height="0.7" fill="#c7d2d7"/><rect x="6.40" y="5.40" width="17.00" height="17.00" rx="1" fill="none" stroke="#ad9897" stroke-width="1.0"/><rect x="7.47" y="22.80" width="0.7" height="0.7" fill="#ad9897"/><rect x="5.30" y="6.47" width="0.7" height="0.7" fill="#ad9897"/><rect x="10.30" y="22.80" width="0.7" height="0.7" fill="#ad9897"/><rect x="5.30" y="9.30" width="0.7" height="0.7" fill="#ad9897"/><rect x="13.13" y="22.80" width="0.7" height="0.7" fill="#ad9897"/><rect x="5.30" y="12.13" width="0.7" height="0.7" fill="#ad9897"/><rect x="15.97" y="22.80" width="0.7" height="0.7" fill="#ad9897"/><rect x="5.30" y="14.97" width="0.7" height="0.7" fill="#ad9897"/><rect x="18.80" y="22.80" width="0.7" height="0.7" fill="#ad9897"/><rect x="5.30" y="17.80" width="0.7" height="0.7" fill="#ad9897"/><rect x="21.63" y="22.80" width="0.7" height="0.7" fill="#ad9897"/><rect x="5.30" y="20.63" width="0.7" height="0.7" fill="#ad9897"/><circle cx="14.90" cy="13.40" r="5.20" fill="none" stroke="#ad9897" stroke-width="0.55"/><path d="M13.55,8.38 A5.20,5.20 0 0 1 19.79,11.62" fill="none" stroke="#ad9897" stroke-width="1.9"/><path d="M16.25,18.42 A5.20,5.20 0 0 1 10.01,15.18" fill="none" stroke="#ad9897" stroke-width="1.9"/><path d="M33.7,7.7 L40.5,11.3 L33.7,14.9 Z" fill="#7dc7a0"/><text x="46.0" y="11.4" class="pn">SplitRecord</text><text x="46.0" y="19.3" class="pt">SplitRecord 1.16.3</text><text x="46.0" y="28.0" class="pb">org.apache.nifi - nifi-standard-nar</text><text x="6.1" y="39.3" class="sl">In</text><text x="51.8" y="39.3" class="sv"><tspan class="b">1</tspan> (228.57 KB)</text><text x="207.60" y="39.3" class="si">5 min</text><text x="6.1" y="50.2" class="sl">Read/Write</text><text x="51.8" y="50.2" class="sv"><tspan class="b">228.57 KB / 179.52 KB</tspan></text><text x="207.60" y="50.2" class="si">5 min</text><text x="6.1" y="62.1" class="sl">Out</text><text x="51.8" y="62.1" class="sv"><tspan class="b">689</tspan> (179.52 KB)</text><text x="207.60" y="62.1" class="si">5 min</text><text x="6.1" y="74.3" class="sl">Tasks/Time</text><text x="51.8" y="74.3" class="sv"><tspan class="b">1 / 00:00:00.118</tspan></text><text x="207.60" y="74.3" class="si">5 min</text></g>
<g transform="translate(701,430)"><rect x="0" y="0" width="217.0" height="78.0" fill="#fff" filter="url(#sh)"/><rect x="0" y="30.0" width="217.0" height="11.299999999999997" fill="#f4f6f7"/><rect x="0" y="53.3" width="217.0" height="12.100000000000009" fill="#f4f6f7"/><rect x="0" y="41.00" width="217.0" height="0.7" fill="#c7d2d7"/><rect x="0" y="53.00" width="217.0" height="0.7" fill="#c7d2d7"/><rect x="0" y="65.10" width="217.0" height="0.7" fill="#c7d2d7"/><rect x="6.40" y="5.40" width="17.00" height="17.00" rx="1" fill="none" stroke="#ad9897" stroke-width="1.0"/><rect x="7.47" y="22.80" width="0.7" height="0.7" fill="#ad9897"/><rect x="5.30" y="6.47" width="0.7" height="0.7" fill="#ad9897"/><rect x="10.30" y="22.80" width="0.7" height="0.7" fill="#ad9897"/><rect x="5.30" y="9.30" width="0.7" height="0.7" fill="#ad9897"/><rect x="13.13" y="22.80" width="0.7" height="0.7" fill="#ad9897"/><rect x="5.30" y="12.13" width="0.7" height="0.7" fill="#ad9897"/><rect x="15.97" y="22.80" width="0.7" height="0.7" fill="#ad9897"/><rect x="5.30" y="14.97" width="0.7" height="0.7" fill="#ad9897"/><rect x="18.80" y="22.80" width="0.7" height="0.7" fill="#ad9897"/><rect x="5.30" y="17.80" width="0.7" height="0.7" fill="#ad9897"/><rect x="21.63" y="22.80" width="0.7" height="0.7" fill="#ad9897"/><rect x="5.30" y="20.63" width="0.7" height="0.7" fill="#ad9897"/><circle cx="14.90" cy="13.40" r="5.20" fill="none" stroke="#ad9897" stroke-width="0.55"/><path d="M13.55,8.38 A5.20,5.20 0 0 1 19.79,11.62" fill="none" stroke="#ad9897" stroke-width="1.9"/><path d="M16.25,18.42 A5.20,5.20 0 0 1 10.01,15.18" fill="none" stroke="#ad9897" stroke-width="1.9"/><path d="M33.7,7.7 L40.5,11.3 L33.7,14.9 Z" fill="#7dc7a0"/><text x="46.0" y="11.4" class="pn">Extract station_uuid</text><text x="46.0" y="19.3" class="pt">EvaluateJsonPath 1.16.3</text><text x="46.0" y="28.0" class="pb">org.apache.nifi - nifi-standard-nar</text><text x="6.1" y="39.3" class="sl">In</text><text x="51.8" y="39.3" class="sv"><tspan class="b">246</tspan> (63.9 KB)</text><text x="207.60" y="39.3" class="si">5 min</text><text x="6.1" y="50.2" class="sl">Read/Write</text><text x="51.8" y="50.2" class="sv"><tspan class="b">63.9 KB / 0 bytes</tspan></text><text x="207.60" y="50.2" class="si">5 min</text><text x="6.1" y="62.1" class="sl">Out</text><text x="51.8" y="62.1" class="sv"><tspan class="b">246</tspan> (63.9 KB)</text><text x="207.60" y="62.1" class="si">5 min</text><text x="6.1" y="74.3" class="sl">Tasks/Time</text><text x="51.8" y="74.3" class="sv"><tspan class="b">246 / 00:00:00.219</tspan></text><text x="207.60" y="74.3" class="si">5 min</text></g>
<g transform="translate(701,568)"><rect x="0" y="0" width="217.0" height="78.0" fill="#fff" filter="url(#sh)"/><rect x="0" y="30.0" width="217.0" height="11.299999999999997" fill="#f4f6f7"/><rect x="0" y="53.3" width="217.0" height="12.100000000000009" fill="#f4f6f7"/><rect x="0" y="41.00" width="217.0" height="0.7" fill="#c7d2d7"/><rect x="0" y="53.00" width="217.0" height="0.7" fill="#c7d2d7"/><rect x="0" y="65.10" width="217.0" height="0.7" fill="#c7d2d7"/><rect x="6.40" y="5.40" width="17.00" height="17.00" rx="1" fill="none" stroke="#ad9897" stroke-width="1.0"/><rect x="7.47" y="22.80" width="0.7" height="0.7" fill="#ad9897"/><rect x="5.30" y="6.47" width="0.7" height="0.7" fill="#ad9897"/><rect x="10.30" y="22.80" width="0.7" height="0.7" fill="#ad9897"/><rect x="5.30" y="9.30" width="0.7" height="0.7" fill="#ad9897"/><rect x="13.13" y="22.80" width="0.7" height="0.7" fill="#ad9897"/><rect x="5.30" y="12.13" width="0.7" height="0.7" fill="#ad9897"/><rect x="15.97" y="22.80" width="0.7" height="0.7" fill="#ad9897"/><rect x="5.30" y="14.97" width="0.7" height="0.7" fill="#ad9897"/><rect x="18.80" y="22.80" width="0.7" height="0.7" fill="#ad9897"/><rect x="5.30" y="17.80" width="0.7" height="0.7" fill="#ad9897"/><rect x="21.63" y="22.80" width="0.7" height="0.7" fill="#ad9897"/><rect x="5.30" y="20.63" width="0.7" height="0.7" fill="#ad9897"/><circle cx="14.90" cy="13.40" r="5.20" fill="none" stroke="#ad9897" stroke-width="0.55"/><path d="M13.55,8.38 A5.20,5.20 0 0 1 19.79,11.62" fill="none" stroke="#ad9897" stroke-width="1.9"/><path d="M16.25,18.42 A5.20,5.20 0 0 1 10.01,15.18" fill="none" stroke="#ad9897" stroke-width="1.9"/><path d="M33.7,7.7 L40.5,11.3 L33.7,14.9 Z" fill="#7dc7a0"/><text x="46.0" y="11.4" class="pn">Get current measurement</text><text x="46.0" y="19.3" class="pt">InvokeHTTP 1.16.3</text><text x="46.0" y="28.0" class="pb">org.apache.nifi - nifi-standard-nar</text><text x="6.1" y="39.3" class="sl">In</text><text x="51.8" y="39.3" class="sv"><tspan class="b">236</tspan> (61.31 KB)</text><text x="207.60" y="39.3" class="si">5 min</text><text x="6.1" y="50.2" class="sl">Read/Write</text><text x="51.8" y="50.2" class="sv"><tspan class="b">0 bytes / 27.8 KB</tspan></text><text x="207.60" y="50.2" class="si">5 min</text><text x="6.1" y="62.1" class="sl">Out</text><text x="51.8" y="62.1" class="sv"><tspan class="b">214</tspan> (27.8 KB)</text><text x="207.60" y="62.1" class="si">5 min</text><text x="6.1" y="74.3" class="sl">Tasks/Time</text><text x="51.8" y="74.3" class="sv"><tspan class="b">236 / 00:00:09.925</tspan></text><text x="207.60" y="74.3" class="si">5 min</text><circle cx="194.20" cy="22.80" r="1.05" fill="#728e9b"/><circle cx="194.20" cy="25.30" r="0.85" fill="none" stroke="#728e9b" stroke-width="0.5"/><circle cx="194.20" cy="27.80" r="1.05" fill="#728e9b"/><circle cx="196.90" cy="22.80" r="0.85" fill="none" stroke="#728e9b" stroke-width="0.5"/><circle cx="196.90" cy="25.30" r="1.05" fill="#728e9b"/><circle cx="196.90" cy="27.80" r="0.85" fill="none" stroke="#728e9b" stroke-width="0.5"/><circle cx="199.60" cy="22.80" r="1.05" fill="#728e9b"/><circle cx="199.60" cy="25.30" r="0.85" fill="none" stroke="#728e9b" stroke-width="0.5"/><circle cx="199.60" cy="27.80" r="1.05" fill="#728e9b"/><text x="207.60" y="28.2" class="sv tc">1</text></g>
<g transform="translate(701,706)"><rect x="0" y="0" width="217.0" height="78.0" fill="#fff" filter="url(#sh)"/><rect x="0" y="30.0" width="217.0" height="11.299999999999997" fill="#f4f6f7"/><rect x="0" y="53.3" width="217.0" height="12.100000000000009" fill="#f4f6f7"/><rect x="0" y="41.00" width="217.0" height="0.7" fill="#c7d2d7"/><rect x="0" y="53.00" width="217.0" height="0.7" fill="#c7d2d7"/><rect x="0" y="65.10" width="217.0" height="0.7" fill="#c7d2d7"/><rect x="6.40" y="5.40" width="17.00" height="17.00" rx="1" fill="none" stroke="#ad9897" stroke-width="1.0"/><rect x="7.47" y="22.80" width="0.7" height="0.7" fill="#ad9897"/><rect x="5.30" y="6.47" width="0.7" height="0.7" fill="#ad9897"/><rect x="10.30" y="22.80" width="0.7" height="0.7" fill="#ad9897"/><rect x="5.30" y="9.30" width="0.7" height="0.7" fill="#ad9897"/><rect x="13.13" y="22.80" width="0.7" height="0.7" fill="#ad9897"/><rect x="5.30" y="12.13" width="0.7" height="0.7" fill="#ad9897"/><rect x="15.97" y="22.80" width="0.7" height="0.7" fill="#ad9897"/><rect x="5.30" y="14.97" width="0.7" height="0.7" fill="#ad9897"/><rect x="18.80" y="22.80" width="0.7" height="0.7" fill="#ad9897"/><rect x="5.30" y="17.80" width="0.7" height="0.7" fill="#ad9897"/><rect x="21.63" y="22.80" width="0.7" height="0.7" fill="#ad9897"/><rect x="5.30" y="20.63" width="0.7" height="0.7" fill="#ad9897"/><circle cx="14.90" cy="13.40" r="5.20" fill="none" stroke="#ad9897" stroke-width="0.55"/><path d="M13.55,8.38 A5.20,5.20 0 0 1 19.79,11.62" fill="none" stroke="#ad9897" stroke-width="1.9"/><path d="M16.25,18.42 A5.20,5.20 0 0 1 10.01,15.18" fill="none" stroke="#ad9897" stroke-width="1.9"/><path d="M33.7,7.7 L40.5,11.3 L33.7,14.9 Z" fill="#7dc7a0"/><text x="46.0" y="11.4" class="pn">Add station_uuid</text><text x="46.0" y="19.3" class="pt">JoltTransformJSON 1.16.3</text><text x="46.0" y="28.0" class="pb">org.apache.nifi - nifi-standard-nar</text><text x="6.1" y="39.3" class="sl">In</text><text x="51.8" y="39.3" class="sv"><tspan class="b">214</tspan> (27.8 KB)</text><text x="207.60" y="39.3" class="si">5 min</text><text x="6.1" y="50.2" class="sl">Read/Write</text><text x="51.8" y="50.2" class="sv"><tspan class="b">27.8 KB / 22.75 KB</tspan></text><text x="207.60" y="50.2" class="si">5 min</text><text x="6.1" y="62.1" class="sl">Out</text><text x="51.8" y="62.1" class="sv"><tspan class="b">214</tspan> (22.75 KB)</text><text x="207.60" y="62.1" class="si">5 min</text><text x="6.1" y="74.3" class="sl">Tasks/Time</text><text x="51.8" y="74.3" class="sv"><tspan class="b">214 / 00:00:01.098</tspan></text><text x="207.60" y="74.3" class="si">5 min</text></g>
<g transform="translate(701,849)"><rect x="0" y="0" width="217.0" height="78.0" fill="#fff" filter="url(#sh)"/><rect x="0" y="30.0" width="217.0" height="11.299999999999997" fill="#f4f6f7"/><rect x="0" y="53.3" width="217.0" height="12.100000000000009" fill="#f4f6f7"/><rect x="0" y="41.00" width="217.0" height="0.7" fill="#c7d2d7"/><rect x="0" y="53.00" width="217.0" height="0.7" fill="#c7d2d7"/><rect x="0" y="65.10" width="217.0" height="0.7" fill="#c7d2d7"/><rect x="6.40" y="5.40" width="17.00" height="17.00" rx="1" fill="none" stroke="#ad9897" stroke-width="1.0"/><rect x="7.47" y="22.80" width="0.7" height="0.7" fill="#ad9897"/><rect x="5.30" y="6.47" width="0.7" height="0.7" fill="#ad9897"/><rect x="10.30" y="22.80" width="0.7" height="0.7" fill="#ad9897"/><rect x="5.30" y="9.30" width="0.7" height="0.7" fill="#ad9897"/><rect x="13.13" y="22.80" width="0.7" height="0.7" fill="#ad9897"/><rect x="5.30" y="12.13" width="0.7" height="0.7" fill="#ad9897"/><rect x="15.97" y="22.80" width="0.7" height="0.7" fill="#ad9897"/><rect x="5.30" y="14.97" width="0.7" height="0.7" fill="#ad9897"/><rect x="18.80" y="22.80" width="0.7" height="0.7" fill="#ad9897"/><rect x="5.30" y="17.80" width="0.7" height="0.7" fill="#ad9897"/><rect x="21.63" y="22.80" width="0.7" height="0.7" fill="#ad9897"/><rect x="5.30" y="20.63" width="0.7" height="0.7" fill="#ad9897"/><circle cx="14.90" cy="13.40" r="5.20" fill="none" stroke="#ad9897" stroke-width="0.55"/><path d="M13.55,8.38 A5.20,5.20 0 0 1 19.79,11.62" fill="none" stroke="#ad9897" stroke-width="1.9"/><path d="M16.25,18.42 A5.20,5.20 0 0 1 10.01,15.18" fill="none" stroke="#ad9897" stroke-width="1.9"/><path d="M33.7,7.7 L40.5,11.3 L33.7,14.9 Z" fill="#7dc7a0"/><text x="46.0" y="11.4" class="pn">PublishKafkaRecord_2_6</text><text x="46.0" y="19.3" class="pt">PublishKafkaRecord_2_6 1.16.3</text><text x="46.0" y="28.0" class="pb">org.apache.nifi - nifi-kafka-2-6-nar</text><text x="6.1" y="39.3" class="sl">In</text><text x="51.8" y="39.3" class="sv"><tspan class="b">214</tspan> (22.75 KB)</text><text x="207.60" y="39.3" class="si">5 min</text><text x="6.1" y="50.2" class="sl">Read/Write</text><text x="51.8" y="50.2" class="sv"><tspan class="b">22.75 KB / 0 bytes</tspan></text><text x="207.60" y="50.2" class="si">5 min</text><text x="6.1" y="62.1" class="sl">Out</text><text x="51.8" y="62.1" class="sv"><tspan class="b">0</tspan> (0 bytes)</text><text x="207.60" y="62.1" class="si">5 min</text><text x="6.1" y="74.3" class="sl">Tasks/Time</text><text x="51.8" y="74.3" class="sv"><tspan class="b">204 / 00:00:02.171</tspan></text><text x="207.60" y="74.3" class="si">5 min</text></g>
<path d="M276.7,197.3 L166.7,286.8" stroke="#000" stroke-width="1.2" fill="none" marker-end="url(#ab)"/>
<path d="M366.3,197.3 L458.6,286.8" stroke="#000" stroke-width="1.2" fill="none" marker-end="url(#ab)"/>
<path d="M498.5,365.0 L498.5,420.0" stroke="#ba554a" stroke-width="1.2" fill="none" marker-end="url(#ar)"/>
<path d="M498.5,498.0 L498.5,568.0" stroke="#ba554a" stroke-width="1.2" fill="none" marker-end="url(#ar)"/>
<path d="M498.5,646.0 L498.5,706.0" stroke="#000" stroke-width="1.2" fill="none" marker-end="url(#ab)"/>
<path d="M498.5,784.0 L498.5,849.0" stroke="#000" stroke-width="1.2" fill="none" marker-end="url(#ab)"/>
<path d="M390.0,606.9 L227.0,606.9" stroke="#000" stroke-width="1.2" fill="none" marker-end="url(#ab)"/>
<path d="M390.0,884.4 L227.0,877.9" stroke="#000" stroke-width="1.2" fill="none" marker-end="url(#ab)"/>
<path d="M809.5,197.0 L809.5,287.0" stroke="#ba554a" stroke-width="1.2" fill="none" marker-end="url(#ar)"/>
<path d="M809.5,365.0 L809.5,430.0" stroke="#ba554a" stroke-width="1.2" fill="none" marker-end="url(#ar)"/>
<path d="M809.5,508.0 L809.5,568.0" stroke="#ba554a" stroke-width="1.2" fill="none" marker-end="url(#ar)"/>
<path d="M809.5,646.0 L809.5,706.0" stroke="#000" stroke-width="1.2" fill="none" marker-end="url(#ab)"/>
<path d="M809.5,784.0 L809.5,849.0" stroke="#000" stroke-width="1.2" fill="none" marker-end="url(#ab)"/>
<g transform="translate(153.1,229.0)"><rect x="0" y="0" width="138.6" height="26.1" fill="#fff" filter="url(#sh)"/><rect x="0" y="0" width="138.6" height="12.7" fill="#f4f6f7"/><rect x="0" y="12.40" width="138.6" height="0.7" fill="#c7d2d7"/><text x="3.9" y="9.0" class="sl">Name</text><text x="28.0" y="9.0" class="sv"><tspan class="b">Response</tspan></text><text x="3.9" y="21.0" class="sl">Queued</text><text x="34.4" y="21.0" class="sv"><tspan class="b">0</tspan> (0 bytes)</text><rect x="3.9" y="23.5" width="58.8" height="1.7" fill="#e2e2e2"/><rect x="75.8" y="23.5" width="58.8" height="1.7" fill="#e2e2e2"/></g>
<g transform="translate(343.1,229.0)"><rect x="0" y="0" width="138.6" height="26.1" fill="#fff" filter="url(#sh)"/><rect x="0" y="0" width="138.6" height="12.7" fill="#f4f6f7"/><rect x="0" y="12.40" width="138.6" height="0.7" fill="#c7d2d7"/><text x="3.9" y="9.0" class="sl">Name</text><text x="28.0" y="9.0" class="sv"><tspan class="b">Response</tspan></text><text x="3.9" y="21.0" class="sl">Queued</text><text x="34.4" y="21.0" class="sv"><tspan class="b">0</tspan> (0 bytes)</text><rect x="3.9" y="23.5" width="58.8" height="1.7" fill="#e2e2e2"/><rect x="75.8" y="23.5" width="58.8" height="1.7" fill="#e2e2e2"/></g>
<g transform="translate(429.3,379.7)"><rect x="-1.0" y="-1.0" width="140.6" height="28.1" fill="none" stroke="#ba554a" stroke-opacity="0.42" stroke-width="2.4" filter="url(#blur1)"/><rect x="0" y="0" width="138.6" height="26.1" fill="#fff"/><rect x="0" y="0" width="138.6" height="12.7" fill="#f4f6f7"/><rect x="0" y="12.40" width="138.6" height="0.7" fill="#c7d2d7"/><text x="3.9" y="9.0" class="sl">Name</text><text x="28.0" y="9.0" class="sv"><tspan class="b">splits</tspan></text><text x="3.9" y="21.0" class="sl">Queued</text><text x="34.4" y="21.0" class="sv"><tspan class="b">522</tspan> (136.4 KB)</text><rect x="3.9" y="23.5" width="58.8" height="1.7" fill="#e2e2e2"/><rect x="3.9" y="23.5" width="58.80" height="1.7" fill="#ba554a"/><rect x="75.8" y="23.5" width="58.8" height="1.7" fill="#e2e2e2"/></g>
<g transform="translate(429.3,520.2)"><rect x="-1.0" y="-1.0" width="140.6" height="28.1" fill="none" stroke="#ba554a" stroke-opacity="0.42" stroke-width="2.4" filter="url(#blur1)"/><rect x="0" y="0" width="138.6" height="26.1" fill="#fff"/><rect x="0" y="0" width="138.6" height="12.7" fill="#f4f6f7"/><rect x="0" y="12.40" width="138.6" height="0.7" fill="#c7d2d7"/><text x="3.9" y="9.0" class="sl">Name</text><text x="28.0" y="9.0" class="sv"><tspan class="b">matched</tspan></text><text x="3.9" y="21.0" class="sl">Queued</text><text x="34.4" y="21.0" class="sv"><tspan class="b">100</tspan> (25.43 KB)</text><rect x="3.9" y="23.5" width="58.8" height="1.7" fill="#e2e2e2"/><rect x="3.9" y="23.5" width="58.80" height="1.7" fill="#ba554a"/><rect x="75.8" y="23.5" width="58.8" height="1.7" fill="#e2e2e2"/></g>
<g transform="translate(429.3,663.2)"><rect x="0" y="0" width="138.6" height="26.1" fill="#fff" filter="url(#sh)"/><rect x="0" y="0" width="138.6" height="12.7" fill="#f4f6f7"/><rect x="0" y="12.40" width="138.6" height="0.7" fill="#c7d2d7"/><text x="3.9" y="9.0" class="sl">Name</text><text x="28.0" y="9.0" class="sv"><tspan class="b">Response</tspan></text><text x="3.9" y="21.0" class="sl">Queued</text><text x="34.4" y="21.0" class="sv"><tspan class="b">2</tspan> (3.25 MB)</text><rect x="3.9" y="23.5" width="58.8" height="1.7" fill="#e2e2e2"/><rect x="3.9" y="23.5" width="1.76" height="1.7" fill="#63b48b"/><rect x="75.8" y="23.5" width="58.8" height="1.7" fill="#e2e2e2"/></g>
<g transform="translate(429.3,803.7)"><rect x="0" y="0" width="138.6" height="26.1" fill="#fff" filter="url(#sh)"/><rect x="0" y="0" width="138.6" height="12.7" fill="#f4f6f7"/><rect x="0" y="12.40" width="138.6" height="0.7" fill="#c7d2d7"/><text x="3.9" y="9.0" class="sl">Name</text><text x="28.0" y="9.0" class="sv"><tspan class="b">success</tspan></text><text x="3.9" y="21.0" class="sl">Queued</text><text x="34.4" y="21.0" class="sv"><tspan class="b">16</tspan> (50.03 MB)</text><rect x="3.9" y="23.5" width="58.8" height="1.7" fill="#e2e2e2"/><rect x="3.9" y="23.5" width="10.00" height="1.7" fill="#63b48b"/><rect x="75.8" y="23.5" width="58.8" height="1.7" fill="#e2e2e2"/><rect x="75.8" y="23.5" width="3.53" height="1.7" fill="#63b48b"/></g>
<g transform="translate(239.0,594.0)"><rect x="0" y="0" width="138.6" height="26.1" fill="#fff" filter="url(#sh)"/><rect x="0" y="0" width="138.6" height="12.7" fill="#f4f6f7"/><rect x="0" y="12.40" width="138.6" height="0.7" fill="#c7d2d7"/><text x="3.9" y="9.0" class="sl">Name</text><text x="28.0" y="9.0" class="sv"><tspan class="b">Failure</tspan></text><text x="3.9" y="21.0" class="sl">Queued</text><text x="34.4" y="21.0" class="sv"><tspan class="b">0</tspan> (0 bytes)</text><rect x="3.9" y="23.5" width="58.8" height="1.7" fill="#e2e2e2"/><rect x="75.8" y="23.5" width="58.8" height="1.7" fill="#e2e2e2"/></g>
<g transform="translate(239.0,868.3)"><rect x="0" y="0" width="138.6" height="26.1" fill="#fff" filter="url(#sh)"/><rect x="0" y="0" width="138.6" height="12.7" fill="#f4f6f7"/><rect x="0" y="12.40" width="138.6" height="0.7" fill="#c7d2d7"/><text x="3.9" y="9.0" class="sl">Name</text><text x="28.0" y="9.0" class="sv"><tspan class="b">failure</tspan></text><text x="3.9" y="21.0" class="sl">Queued</text><text x="34.4" y="21.0" class="sv"><tspan class="b">0</tspan> (0 bytes)</text><rect x="3.9" y="23.5" width="58.8" height="1.7" fill="#e2e2e2"/><rect x="75.8" y="23.5" width="58.8" height="1.7" fill="#e2e2e2"/></g>
<g transform="translate(740.3,229.2)"><rect x="-1.0" y="-1.0" width="140.6" height="28.1" fill="none" stroke="#ba554a" stroke-opacity="0.42" stroke-width="2.4" filter="url(#blur1)"/><rect x="0" y="0" width="138.6" height="26.1" fill="#fff"/><rect x="0" y="0" width="138.6" height="12.7" fill="#f4f6f7"/><rect x="0" y="12.40" width="138.6" height="0.7" fill="#c7d2d7"/><text x="3.9" y="9.0" class="sl">Name</text><text x="28.0" y="9.0" class="sv"><tspan class="b">Response</tspan></text><text x="3.9" y="21.0" class="sl">Queued</text><text x="34.4" y="21.0" class="sv"><tspan class="b">1</tspan> (228.57 KB)</text><rect x="3.9" y="23.5" width="58.8" height="1.7" fill="#e2e2e2"/><rect x="3.9" y="23.5" width="58.80" height="1.7" fill="#ba554a"/><rect x="75.8" y="23.5" width="58.8" height="1.7" fill="#e2e2e2"/></g>
<g transform="translate(740.3,384.7)"><rect x="-1.0" y="-1.0" width="140.6" height="28.1" fill="none" stroke="#ba554a" stroke-opacity="0.42" stroke-width="2.4" filter="url(#blur1)"/><rect x="0" y="0" width="138.6" height="26.1" fill="#fff"/><rect x="0" y="0" width="138.6" height="12.7" fill="#f4f6f7"/><rect x="0" y="12.40" width="138.6" height="0.7" fill="#c7d2d7"/><text x="3.9" y="9.0" class="sl">Name</text><text x="28.0" y="9.0" class="sv"><tspan class="b">splits</tspan></text><text x="3.9" y="21.0" class="sl">Queued</text><text x="34.4" y="21.0" class="sv"><tspan class="b">443</tspan> (115.62 KB)</text><rect x="3.9" y="23.5" width="58.8" height="1.7" fill="#e2e2e2"/><rect x="3.9" y="23.5" width="58.80" height="1.7" fill="#ba554a"/><rect x="75.8" y="23.5" width="58.8" height="1.7" fill="#e2e2e2"/></g>
<g transform="translate(740.3,525.2)"><rect x="-1.0" y="-1.0" width="140.6" height="28.1" fill="none" stroke="#ba554a" stroke-opacity="0.42" stroke-width="2.4" filter="url(#blur1)"/><rect x="0" y="0" width="138.6" height="26.1" fill="#fff"/><rect x="0" y="0" width="138.6" height="12.7" fill="#f4f6f7"/><rect x="0" y="12.40" width="138.6" height="0.7" fill="#c7d2d7"/><text x="3.9" y="9.0" class="sl">Name</text><text x="28.0" y="9.0" class="sv"><tspan class="b">matched</tspan></text><text x="3.9" y="21.0" class="sl">Queued</text><text x="34.4" y="21.0" class="sv"><tspan class="b">10</tspan> (2.59 KB)</text><rect x="3.9" y="23.5" width="58.8" height="1.7" fill="#e2e2e2"/><rect x="3.9" y="23.5" width="58.80" height="1.7" fill="#ba554a"/><rect x="75.8" y="23.5" width="58.8" height="1.7" fill="#e2e2e2"/></g>
<g transform="translate(740.3,663.2)"><rect x="0" y="0" width="138.6" height="26.1" fill="#fff" filter="url(#sh)"/><rect x="0" y="0" width="138.6" height="12.7" fill="#f4f6f7"/><rect x="0" y="12.40" width="138.6" height="0.7" fill="#c7d2d7"/><text x="3.9" y="9.0" class="sl">Name</text><text x="28.0" y="9.0" class="sv"><tspan class="b">Response</tspan></text><text x="3.9" y="21.0" class="sl">Queued</text><text x="34.4" y="21.0" class="sv"><tspan class="b">0</tspan> (0 bytes)</text><rect x="3.9" y="23.5" width="58.8" height="1.7" fill="#e2e2e2"/><rect x="75.8" y="23.5" width="58.8" height="1.7" fill="#e2e2e2"/></g>
<g transform="translate(740.3,803.7)"><rect x="0" y="0" width="138.6" height="26.1" fill="#fff" filter="url(#sh)"/><rect x="0" y="0" width="138.6" height="12.7" fill="#f4f6f7"/><rect x="0" y="12.40" width="138.6" height="0.7" fill="#c7d2d7"/><text x="3.9" y="9.0" class="sl">Name</text><text x="28.0" y="9.0" class="sv"><tspan class="b">success</tspan></text><text x="3.9" y="21.0" class="sl">Queued</text><text x="34.4" y="21.0" class="sv"><tspan class="b">0</tspan> (0 bytes)</text><rect x="3.9" y="23.5" width="58.8" height="1.7" fill="#e2e2e2"/><rect x="75.8" y="23.5" width="58.8" height="1.7" fill="#e2e2e2"/></g>
</svg>
<div id="header"><svg id="hdr" width="1680" height="56" viewBox="0 0 1680 56"><path d="M15,43.6 V17.5 H21.6 V20.6 Q24.2,17.2 28.6,17.2 Q34.1,17.4 34.1,24.5 V43.6 H28 V25.7 Q28,22.6 25.2,22.6 Q21.6,22.6 21.6,26.4 V43.6 Z" fill="#698490"/><rect x="38.9" y="10" width="6.1" height="5" fill="#698490"/><rect x="38.9" y="18.2" width="6.1" height="25.4" fill="#698490"/><path d="M51.2,43.6 V22.6 H48 V18.2 H51.2 V16.5 Q51.2,9.3 58.5,9.3 Q60.5,9.3 61.8,9.6 V14.6 Q60.8,14.4 59.6,14.4 Q57.8,14.4 57.8,16.6 V18.2 H61.8 V22.6 H57.8 V43.6 Z" fill="#eef2f4"/><rect x="65.4" y="10" width="6.6" height="5" fill="#eef2f4"/><rect x="65.4" y="18.2" width="6.6" height="25.4" fill="#eef2f4"/><path d="M89,8.2 Q95,17 99.5,25 Q102.5,31 101.5,36 Q100,43.5 92,45 L88.5,45 Q80,44 77,37 Q75,31 79,24.5 Q83.5,16.5 89,8.2 Z" fill="#698490"/><path d="M86.4,14 Q80,23 78,29 Q76,36 83.5,42" fill="none" stroke="#eef2f4" stroke-width="0.9"/><rect x="94.5" y="31.3" width="5.3" height="4.9" fill="#aabbc3"/><rect x="99.7" y="31.3" width="3.7" height="4.9" fill="#aabbc3"/><rect x="89.1" y="35.9" width="5.3" height="5.3" fill="#aabbc3"/><rect x="94.5" y="35.9" width="5.3" height="5.3" fill="#aabbc3"/><rect x="99.9" y="35.9" width="3.4" height="5.3" fill="#aabbc3"/><rect x="89.1" y="40.9" width="5.3" height="4.4" fill="#aabbc3"/><rect x="94.5" y="40.9" width="5.3" height="4.2" fill="#aabbc3"/><rect x="95.0" y="31.8" width="4.3" height="3.9" fill="#698490"/><rect x="100.2" y="31.8" width="2.7" height="3.9" fill="#698490"/><rect x="89.6" y="36.4" width="4.3" height="4.3" fill="#698490"/><rect x="95.0" y="36.4" width="4.3" height="4.3" fill="#698490"/><rect x="100.4" y="36.4" width="2.4" height="4.3" fill="#698490"/><rect x="89.6" y="41.4" width="4.3" height="3.4" fill="#698490"/><rect x="95.0" y="41.4" width="4.3" height="3.2" fill="#698490"/><rect x="137.7" y="12.3" width="28.1" height="27.3" rx="2.4" fill="none" stroke="#004849" stroke-width="2.2"/><rect x="136.0" y="40.4" width="1.1" height="2.4" fill="#004849"/><rect x="136.1" y="14.5" width="1.0" height="1.6" fill="#004849"/><rect x="141.3" y="40.4" width="1.1" height="2.4" fill="#004849"/><rect x="136.1" y="19.1" width="1.0" height="1.6" fill="#004849"/><rect x="146.6" y="40.4" width="1.1" height="2.4" fill="#004849"/><rect x="136.1" y="23.7" width="1.0" height="1.6" fill="#004849"/><rect x="151.9" y="40.4" width="1.1" height="2.4" fill="#004849"/><rect x="136.1" y="28.3" width="1.0" height="1.6" fill="#004849"/><rect x="157.2" y="40.4" width="1.1" height="2.4" fill="#004849"/><rect x="136.1" y="32.9" width="1.0" height="1.6" fill="#004849"/><rect x="162.5" y="40.4" width="1.1" height="2.4" fill="#004849"/><rect x="136.1" y="37.5" width="1.0" height="1.6" fill="#004849"/><circle cx="151.9" cy="25.8" r="8.3" fill="none" stroke="#004849" stroke-width="1.0"/><path d="M144.71,21.65 A8.3,8.3 0 0 1 147.75,18.61" fill="none" stroke="#004849" stroke-width="1.9" stroke-linecap="butt"/><path d="M147.50,18.76 A8.3,8.3 0 0 1 159.48,22.42" fill="none" stroke="#004849" stroke-width="3.0" stroke-linecap="round"/><path d="M144.38,29.31 A8.3,8.3 0 0 0 155.01,33.50" fill="none" stroke="#004849" stroke-width="3.0" stroke-linecap="round"/><path d="M154.74,33.60 A8.3,8.3 0 0 0 158.07,31.35" fill="none" stroke="#004849" stroke-width="1.9" stroke-linecap="butt"/><path d="M203.2,15.2 H225.2 Q226.8,15.2 226.8,16.8 V37 Q226.8,38.6 225.2,38.6 H209.4" fill="none" stroke="#004849" stroke-width="2.1"/><path d="M197.3,26 H205.4 V17.6 L214.8,29.4 L205.4,39.9 V32.8 H197.3 Z" fill="none" stroke="#004849" stroke-width="2" stroke-linejoin="miter"/><rect x="220" y="25" width="1.9" height="8.75" fill="#004849"/><path d="M276,38.6 H258.5 V15.2 H280.8 Q282.2,15.2 282.2,16.6 V18.4" fill="none" stroke="#004849" stroke-width="2.1"/><ellipse cx="264.7" cy="29.4" rx="3.1" ry="3.7" fill="none" stroke="#004849" stroke-width="1.4"/><path d="M271.6,26 H279 V19.6 L287.9,29.4 L279,39.3 V32.6 H271.6 Z" fill="none" stroke="#004849" stroke-width="2"/><rect x="319.5" y="13.3" width="4.1" height="3.5" rx="0.9" fill="none" stroke="#004849" stroke-width="2.3"/><rect x="345.1" y="13.3" width="4.1" height="3.5" rx="0.9" fill="none" stroke="#004849" stroke-width="2.3"/><rect x="319.5" y="38.3" width="4.1" height="3.5" rx="0.9" fill="none" stroke="#004849" stroke-width="2.3"/><rect x="345.1" y="38.3" width="4.1" height="3.5" rx="0.9" fill="none" stroke="#004849" stroke-width="2.3"/><rect x="325.9" y="14" width="16.9" height="1.6" fill="#004849"/><rect x="325.9" y="39" width="16.9" height="1.6" fill="#004849"/><rect x="320.6" y="19" width="1.6" height="16.6" fill="#004849"/><rect x="346.2" y="19" width="1.6" height="16.6" fill="#004849"/><rect x="327" y="20.4" width="9.5" height="8.6" rx="2" fill="none" stroke="#004849" stroke-width="1.5"/><rect x="332.6" y="25.4" width="9.2" height="8.9" rx="2" fill="#aabbc3" stroke="#004849" stroke-width="1.5"/><rect x="380.3" y="13.3" width="4.1" height="3.5" rx="0.9" fill="none" stroke="#004849" stroke-width="2.3"/><rect x="405.9" y="13.3" width="4.1" height="3.5" rx="0.9" fill="none" stroke="#004849" stroke-width="2.3"/><rect x="380.3" y="38.3" width="4.1" height="3.5" rx="0.9" fill="none" stroke="#004849" stroke-width="2.3"/><rect x="405.9" y="38.3" width="4.1" height="3.5" rx="0.9" fill="none" stroke="#004849" stroke-width="2.3"/><rect x="386.7" y="14" width="16.9" height="1.6" fill="#004849"/><rect x="386.7" y="39" width="16.9" height="1.6" fill="#004849"/><rect x="381.4" y="19" width="1.6" height="16.6" fill="#004849"/><rect x="407.1" y="19" width="1.6" height="16.6" fill="#004849"/><path d="M389.5,32 Q386.6,32 386.6,29.2 Q386.6,26.2 389.6,26.2 Q390,23.2 393,23.6 Q395,21.6 398,22.6 Q401.2,23.8 400.8,27 Q404,27.2 404,29.6 Q404,32 401.2,32 Z" fill="none" stroke="#004849" stroke-width="1.8"/><rect x="440.7" y="13.7" width="5.9" height="6.5" rx="1.6" fill="none" stroke="#004849" stroke-width="1.2"/><rect x="449.2" y="11.5" width="5.9" height="6.5" rx="1.6" fill="none" stroke="#004849" stroke-width="1.2"/><rect x="457.9" y="11.5" width="5.9" height="6.5" rx="1.6" fill="none" stroke="#004849" stroke-width="1.2"/><rect x="466.0" y="13.7" width="5.9" height="6.5" rx="1.6" fill="none" stroke="#004849" stroke-width="1.2"/><path d="M443.6,20.2 Q448,22.5 452.5,23.2 M452,18 Q453,21 454.5,23 M460.8,18 Q460,21 458.5,23 M469,20.2 Q465,22.5 460.5,23.2" fill="none" stroke="#004849" stroke-width="1"/><ellipse cx="456.6" cy="23.6" rx="5.4" ry="1.3" fill="#004849"/><path d="M450.3,24.6 Q456.6,28.2 462.9,24.6" fill="none" stroke="#004849" stroke-width="1.1"/><rect x="454.8" y="26.6" width="3.8" height="7" fill="#004849"/><path d="M451,33.2 H462 L456.6,38.9 Z" fill="#004849"/><path d="M453.3,37.6 V41.6 Q453.3,42.4 454.1,42.4 H459 Q459.7,42.4 459.7,41.6 V37.6" fill="none" stroke="#004849" stroke-width="1.2"/><rect x="501.6" y="10.9" width="15.6" height="6.9" rx="0.8" fill="#004849"/><rect x="517.5" y="24.1" width="15.6" height="6.5" rx="0.8" fill="#004849"/><rect x="508.4" y="36.25" width="16" height="6.55" rx="0.8" fill="#004849"/><path d="M510,17.5 L523.4,24.3 M524.2,30.4 L517.5,36.4" stroke="#004849" stroke-width="1.1"/><path d="M563.9,13.6 H578.9" stroke="#004849" stroke-width="2.8" stroke-linecap="round"/><path d="M563.9,18.3 H582.35" stroke="#004849" stroke-width="2.8" stroke-linecap="round"/><path d="M563.9,22.7 H580.5" stroke="#004849" stroke-width="2.8" stroke-linecap="round"/><path d="M563.9,26.7 H573.3000000000001" stroke="#004849" stroke-width="2.8" stroke-linecap="round"/><path d="M594.3,16.2 L579.5,30.8 L575.9,41.6 L586.8,38.4 L594.3,31.2" fill="none" stroke="#004849" stroke-width="1.5" stroke-linejoin="round"/><path d="M583.8,33.6 L594,23.6" stroke="#004849" stroke-width="1.1"/><path d="M575.9,41.6 L576.9,37.8 L579.5,40.6 Z" fill="#004849"/><rect x="1634.8" y="16.2" width="27.6" height="4.4" rx="2.2" fill="#004849"/><rect x="1634.8" y="25.2" width="27.6" height="4.4" rx="2.2" fill="#004849"/><rect x="1634.8" y="34.3" width="27.6" height="4.4" rx="2.2" fill="#004849"/></svg><div id="user">admin</div><div id="logout">LOG OUT</div><div id="logul"></div></div>
<div id="status"><svg id="sts" width="1680" height="32" viewBox="0 56 1680 32"><path d="M28.5,66.96000000000001 L33.1,64.2 L37.7,66.96000000000001 L37.7,71.10000000000001 L33.1,73.86 L28.5,71.10000000000001 Z" fill="#728e9b"/><path d="M33.1,68.8 L37.239999999999995,67.144 L37.239999999999995,70.824 L33.1,73.21600000000001 Z" fill="#e3e8eb" opacity="0.8"/><path d="M29.604,66.96000000000001 L33.1,65.12 L36.596000000000004,66.96000000000001 L33.1,68.616 Z" fill="#e3e8eb" opacity="0.85"/><path d="M24.2,73.36 L28.799999999999997,70.6 L33.4,73.36 L33.4,77.5 L28.799999999999997,80.25999999999999 L24.2,77.5 Z" fill="#728e9b"/><path d="M28.799999999999997,75.19999999999999 L32.94,73.544 L32.94,77.22399999999999 L28.799999999999997,79.616 Z" fill="#e3e8eb" opacity="0.8"/><path d="M25.304,73.36 L28.799999999999997,71.52 L32.296,73.36 L28.799999999999997,75.01599999999999 Z" fill="#e3e8eb" opacity="0.85"/><path d="M33.0,73.36 L37.6,70.6 L42.2,73.36 L42.2,77.5 L37.6,80.25999999999999 L33.0,77.5 Z" fill="#728e9b"/><path d="M37.6,75.19999999999999 L41.739999999999995,73.544 L41.739999999999995,77.22399999999999 L37.6,79.616 Z" fill="#e3e8eb" opacity="0.8"/><path d="M34.104,73.36 L37.6,71.52 L41.096000000000004,73.36 L37.6,75.01599999999999 Z" fill="#e3e8eb" opacity="0.85"/><circle cx="134.4" cy="66.4" r="1.85" fill="none" stroke="#728e9b" stroke-width="0.9"/><circle cx="134.4" cy="71.80000000000001" r="2.3" fill="#728e9b"/><circle cx="134.4" cy="77.2" r="1.85" fill="none" stroke="#728e9b" stroke-width="0.9"/><circle cx="139.75" cy="66.4" r="2.3" fill="#728e9b"/><circle cx="139.75" cy="71.80000000000001" r="2.3" fill="#728e9b"/><circle cx="139.75" cy="77.2" r="2.3" fill="#728e9b"/><circle cx="145.1" cy="66.4" r="1.85" fill="none" stroke="#728e9b" stroke-width="0.9"/><circle cx="145.1" cy="71.80000000000001" r="1.85" fill="none" stroke="#728e9b" stroke-width="0.9"/><circle cx="145.1" cy="77.2" r="2.3" fill="#728e9b"/><rect x="216.8" y="65.2" width="2.3" height="2.3" fill="#728e9b"/><rect x="220.3" y="65.2" width="11.7" height="2.3" fill="#728e9b"/><rect x="216.8" y="69.10000000000001" width="2.3" height="2.3" fill="#728e9b"/><rect x="220.3" y="69.10000000000001" width="11.7" height="2.3" fill="#728e9b"/><rect x="216.8" y="73.0" width="2.3" height="2.3" fill="#728e9b"/><rect x="220.3" y="73.0" width="11.7" height="2.3" fill="#728e9b"/><rect x="216.8" y="76.9" width="2.3" height="2.3" fill="#728e9b"/><rect x="220.3" y="76.9" width="11.7" height="2.3" fill="#728e9b"/><circle cx="414.3" cy="71.8" r="6" fill="none" stroke="#a6b8c1" stroke-width="1.2"/><circle cx="414.3" cy="71.8" r="3.6" fill="none" stroke="#a6b8c1" stroke-width="1.2"/><circle cx="414.3" cy="71.8" r="1.5" fill="#a6b8c1"/><circle cx="494.5" cy="71.8" r="6" fill="none" stroke="#a6b8c1" stroke-width="1.2"/><circle cx="494.5" cy="71.8" r="3.6" fill="none" stroke="#a6b8c1" stroke-width="1.2"/><path d="M487.5,64.8 L501.5,78.8" stroke="#a6b8c1" stroke-width="1.3"/><path d="M570.8,64.8 L583,71.8 L570.8,78.8 Z" fill="#7dc7a0"/><rect x="657.5" y="65.2" width="13.2" height="13.2" fill="#a6b8c1"/><path d="M744.2,64.2 L751.8,78.2 L736.8,78.2 Z" fill="#a6b8c1"/><rect x="743.5" y="68.5" width="1.5" height="5.5" fill="#e3e8eb"/><rect x="743.5" y="75" width="1.5" height="1.6" fill="#e3e8eb"/><path d="M826,64.5 L821.5,72 L825,72 L822.5,79 L829.5,69.5 L826,69.5 L828.5,64.5 Z" fill="#a6b8c1"/><path d="M818.5,65 L832,79" stroke="#a6b8c1" stroke-width="1.2"/><path d="M903,72.5 L907.2,76.6 L915.8,67.6" fill="none" stroke="#a6b8c1" stroke-width="2.8"/><path d="M989.5,64.8 V78.8 M983.4,68.3 L995.6,75.3 M983.4,75.3 L995.6,68.3" stroke="#a6b8c1" stroke-width="2.6"/><circle cx="1069.4" cy="71.8" r="6.4" fill="#a6b8c1"/><path d="M1069.4,67.2 L1073.2,71.4 H1071 V76 H1067.8 V71.4 H1065.6 Z" fill="#e3e8eb"/><circle cx="1148.1" cy="71.8" r="6.9" fill="#a6b8c1"/><rect x="1147" y="67" width="2.3" height="6" fill="#e3e8eb"/><rect x="1147" y="74.3" width="2.3" height="2.2" fill="#e3e8eb"/><text x="1225.2" y="77.6" font-family="Liberation Sans" font-weight="bold" font-size="14" fill="#a6b8c1" text-anchor="middle">?</text><path d="M1297,70.4 A5.5,5.5 0 0 1 1306.8,68.9 M1306.9,73.2 A5.5,5.5 0 0 1 1297.1,74.7" fill="none" stroke="#728e9b" stroke-width="2.3"/><path d="M1308.3,65.6 V70.6 H1303.3 Z M1295.6,78.1 V73.1 H1300.6 Z" fill="#728e9b"/><circle cx="1631.6" cy="71.0" r="5.0" fill="none" stroke="#004849" stroke-width="2.5"/><path d="M1635.4,74.8 L1638.8,78.0" stroke="#004849" stroke-width="2.4" stroke-linecap="round"/><path d="M1658.7,65.5 H1670.2 V74.5 L1667.2,77.2 H1658.7 Z" fill="none" stroke="#fff" stroke-width="1.1"/><path d="M1667.2,77.2 V74.5 H1670.2" fill="none" stroke="#fff" stroke-width="0.8"/></svg><span class="st" style="left:53.0px">1 / 1</span><span class="st" style="left:158.9px">4</span><span class="st" style="left:240.5px"><span style="letter-spacing:0.28px">1,095 / 53.78 MB</span></span><span class="st" style="left:428.75px">0</span><span class="st" style="left:513.75px">0</span><span class="st" style="left:591.0px">15</span><span class="st" style="left:679.25px">0</span><span class="st" style="left:760.0px">0</span><span class="st" style="left:844.0px">0</span><span class="st" style="left:925.0px">0</span><span class="st" style="left:1005.0px">0</span><span class="st" style="left:1084.5px">0</span><span class="st" style="left:1163.25px">0</span><span class="st" style="left:1238.75px">0</span><span class="st" style="left:1317.5px">12:58:27 GMT</span><div id="srch"></div><div id="tog"></div></div>
<div class="gc" style="top:110.3px"></div><div class="gc" style="top:146.1px"></div>
<svg id="gcicons" width="40" height="80" viewBox="0 100 40 80">
<circle cx="14.3" cy="128.4" r="6.9" fill="none" stroke="#004849" stroke-width="2.1"/>
<path d="M11.6,127.1 L16.6,125 L16.6,129.6 L11.6,132.1 Z" fill="#004849"/>
<path d="M13.2,128.6 L15.0,129.9 L13.2,130.6 Z" fill="#f9fafb"/>
<path d="M12.4,164.6 V157.6 Q12.4,155.6 13.9,155.6 Q15.4,155.6 15.4,157.6 V160.6 L19.6,161.6 Q21.2,162.1 21.0,164.0 L20.6,170.3 H12.6 Q12.0,168.0 10.4,167.0 L7.8,165.5 Q6.6,164.6 7.2,163.6 Q7.8,162.8 9.0,163.0 Z" fill="none" stroke="#004849" stroke-width="1.2" stroke-linejoin="round"/>
<rect x="12.2" y="170.0" width="8.6" height="3.6" fill="#004849"/>
</svg>
<div id="footer"><span>NiFi Flow</span></div>
</body></html>
